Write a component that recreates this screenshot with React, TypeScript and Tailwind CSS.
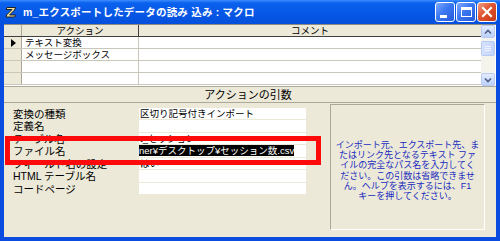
import React from 'react';

const gridRows = ['テキスト変換', 'メッセージボックス', '', ''];

const args = [
  { label: '変換の種類', value: '区切り記号付きインポート', h: 'h-[12px]' },
  { label: '定義名', value: '', h: 'h-[13px]' },
  { label: 'テーブル名', value: 't_セッション', h: 'h-[12px]' },
  { label: 'ファイル名', value: 'ner¥デスクトップ¥セッション数.csv', h: 'h-[13px]', selected: true },
  { label: 'フィールド名の設定', value: 'はい', h: 'h-[12px]' },
  { label: 'HTML テーブル名', value: '', h: 'h-[13px]' },
  { label: 'コードページ', value: '', h: 'h-[12px]' },
];

const helpLines = [
  'インポート元、エクスポート先、ま',
  'たはリンク先となるテキスト ファ',
  'イルの完全なパス名を入力してく',
  'ださい。この引数は省略できませ',
  'ん。ヘルプを表示するには、F1',
  'キーを押してください。',
];

const MacroIcon = () => (
  <svg width="12" height="12" viewBox="0 0 12 12">
    <path d="M2 1.5 L10.5 1.5 L9.5 4 L4.5 9 L10.5 9 L9.5 11 L1 11 L2 8.5 L7 3.5 L1 3.5 Z" fill="#F3E7A8" stroke="#222" strokeWidth="1" />
  </svg>
);

const TitleButton = ({ kind }: { kind: 'min' | 'max' | 'close' }) => {
  const bg =
    kind === 'close'
      ? 'bg-[linear-gradient(135deg,#F0A088_0%,#E0532E_45%,#C73A17_100%)]'
      : 'bg-[linear-gradient(135deg,#7FA9FF_0%,#3B78F2_45%,#2659D8_100%)]';
  return (
    <div className={`w-[20px] h-[20px] rounded-[3px] border border-white flex items-center justify-center ${bg}`}>
      {kind === 'min' && <div className="w-[7px] h-[3px] bg-white mt-[8px] mr-[4px]" />}
      {kind === 'max' && <div className="w-[11px] h-[10px] border border-white border-t-[3px]" />}
      {kind === 'close' && (
        <svg width="12" height="12" viewBox="0 0 12 12">
          <path d="M2 2 L10 10 M10 2 L2 10" stroke="white" strokeWidth="2.2" strokeLinecap="square" />
        </svg>
      )}
    </div>
  );
};

const ScrollArrow = ({ up }: { up?: boolean }) => (
  <div className="w-[14px] h-[13px] rounded-[2px] border border-[#B7CBF5] bg-[linear-gradient(180deg,#E4ECFE,#BCD0FA)] flex items-center justify-center">
    <svg width="8" height="6" viewBox="0 0 8 6">
      <path d={up ? 'M1 4.5 L4 1.5 L7 4.5' : 'M1 1.5 L4 4.5 L7 1.5'} fill="none" stroke="#4D6185" strokeWidth="1.6" />
    </svg>
  </div>
);

export default function App() {
  return (
    <div className="w-[500px] h-[241px] flex flex-col bg-[#0A4BE0] font-['Liberation_Sans','Noto_Sans_CJK_JP',sans-serif] text-black overflow-hidden relative">
      {/* タイトルバー */}
      <div className="h-[24px] flex items-center pl-[5px] pr-[3px] bg-[linear-gradient(180deg,#3D8DFF_0%,#0A62EE_12%,#0656E5_60%,#0550DC_100%)]">
        <MacroIcon />
        <span className="ml-[6px] text-white font-bold text-[10.5px] leading-none tracking-[0.2px]">
          m_エクスポートしたデータの読み 込み : マクロ
        </span>
        <div className="ml-auto flex gap-[1px]">
          <TitleButton kind="min" />
          <TitleButton kind="max" />
          <TitleButton kind="close" />
        </div>
      </div>

      <div className="flex-1 mx-[4px] mb-[4px] bg-[#ECE9D8] flex flex-col">
        {/* マクロのグリッド */}
        <div className="h-[62px] flex border-t border-[#8E8C80] bg-white">
          <div className="flex-1 flex flex-col">
            <div className="h-[12px] flex bg-[#ECE9D8] border-b border-[#404040] text-[9.5px] leading-[11px]">
              <div className="w-[18px] border-r border-[#ACA899]" />
              <div className="w-[117px] border-r border-[#404040] text-center">アクション</div>
              <div className="flex-1 text-center">コメント</div>
            </div>
            {gridRows.map((r, i) => (
              <div key={i} className="h-[12px] flex border-b border-[#C9C7BA] text-[9.5px] leading-[11px]">
                <div className="w-[18px] bg-[#ECE9D8] border-r border-[#ACA899] flex items-center pl-[7px]">
                  {i === 0 && (
                    <svg width="5" height="8" viewBox="0 0 5 8">
                      <path d="M0 0 L5 4 L0 8 Z" fill="#000" />
                    </svg>
                  )}
                </div>
                <div className="w-[117px] border-r border-[#C9C7BA] pl-[3px] whitespace-nowrap">{r}</div>
                <div className="flex-1" />
              </div>
            ))}
          </div>
          {/* スクロールバー */}
          <div className="w-[14px] flex flex-col items-center bg-[#F4F3EC] mr-[1px]">
            <ScrollArrow up />
            <div className="mt-[3px] w-[14px] h-[15px] rounded-[2px] border border-[#B7CBF5] bg-[linear-gradient(90deg,#D6E2FD,#C3D4FB)] flex flex-col items-center justify-center gap-[1px]">
              <div className="w-[6px] h-px bg-[#EEF3FF]" />
              <div className="w-[6px] h-px bg-[#EEF3FF]" />
              <div className="w-[6px] h-px bg-[#EEF3FF]" />
            </div>
            <div className="flex-1" />
            <ScrollArrow />
          </div>
        </div>

        {/* アクションの引数 */}
        <div className="h-[17px] border-t border-[#ACA899] border-b border-b-[#ACA899] flex items-center justify-center text-[11px] leading-none">
          <span className="pr-[4px] pt-[2px]">アクションの引数</span>
        </div>

        <div className="flex flex-1">
          <div className="w-[302px] pt-[5px] flex flex-col">
            {args.map((a) => (
              <div key={a.label} className={`${a.h} flex`}>
                <div className="w-[135px] pl-[9px] text-[10.5px] leading-[12px] whitespace-nowrap">{a.label}</div>
                <div className="flex-1 mb-px bg-white text-[9.5px] leading-[11px] whitespace-nowrap overflow-hidden">
                  {a.value && (
                    <span className={a.selected ? 'bg-black text-white' : 'pl-px'}>{a.value}</span>
                  )}
                </div>
              </div>
            ))}
          </div>
          <div className="ml-[24px] mt-px w-[155px] h-[126px] border border-t-[#ACA899] border-l-[#ACA899] border-b-white border-r-white pt-[35px] flex flex-col items-center text-[9px] leading-[10.2px] text-[#1A2BBF]">
            {helpLines.map((l) => (
              <div key={l} className="whitespace-nowrap">{l}</div>
            ))}
          </div>
        </div>
      </div>

      {/* 赤い囲み */}
      <div className="absolute left-[5px] top-[136px] w-[316px] h-[29px] border-[5px] border-[#FF0A0A]" />
    </div>
  );
}
